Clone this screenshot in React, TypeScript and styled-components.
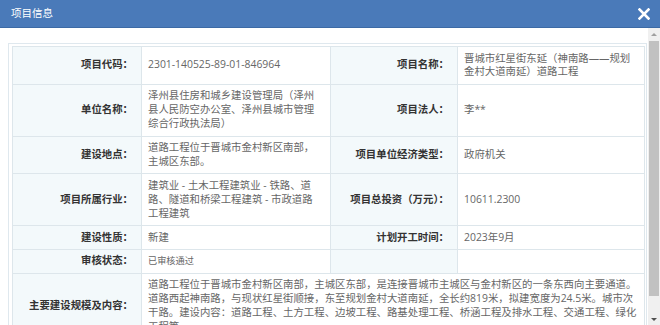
import React from 'react';
import styled, { createGlobalStyle } from 'styled-components';

const GlobalStyle = createGlobalStyle`
  *, *::before, *::after {
    box-sizing: border-box;
  }

  html, body {
    margin: 0;
    padding: 0;
    background: #fff;
  }

  body {
    font-family: "Open Sans", "Noto Sans CJK SC", sans-serif;
  }
`;

const Dialog = styled.div`
  width: 660px;
  height: 325px;
  display: flex;
  flex-direction: column;
  overflow: hidden;
  background: #fff;
`;

const TitleBar = styled.div`
  height: 28px;
  flex-shrink: 0;
  display: flex;
  align-items: center;
  justify-content: space-between;
  padding: 0 9px 0 11px;
  background: #4a7ab9;
  border-bottom: 1px solid #3c6aa5;
`;

const Title = styled.span`
  color: #fff;
  font-size: 10.5px;
  line-height: 1;
`;

const CloseButton = styled.button`
  display: flex;
  align-items: center;
  justify-content: center;
  width: 14px;
  height: 14px;
  padding: 0;
  border: none;
  background: transparent;
  cursor: pointer;
`;

const Body = styled.div`
  flex: 1;
  min-height: 0;
  display: flex;
`;

const Content = styled.div`
  flex: 1;
  overflow: hidden;
  padding: 15px 1px 0 8px;
`;

const Frame = styled.div`
  border: 1px solid #dfe8ee;
  padding: 2px 1px 2px 3px;
  background: #fff;
`;

const InfoTable = styled.table`
  width: 100%;
  border-collapse: collapse;
  table-layout: fixed;
  font-size: 10.4px;
  line-height: 13.9px;
`;

const Col = styled.col<{ $w?: number }>`
  width: ${p => (p.$w ? `${p.$w}px` : 'auto')};
`;

const LabelCell = styled.th`
  padding: 4.5px 8px 4.5px 6px;
  border: 1px solid #dde6eb;
  background: #f3f9fb;
  color: #333;
  font-weight: 700;
  text-align: right;
  vertical-align: middle;
`;

const ValueCell = styled.td<{ $small?: boolean; $wide?: boolean }>`
  padding: 4.5px ${p => (p.$wide ? '3px' : '12px')} 4.5px 6px;
  border: 1px solid #dde6eb;
  background: #fff;
  color: #666;
  text-align: left;
  vertical-align: middle;
  font-size: ${p => (p.$small ? '9.2px' : '10.4px')};
`;

const ScrollRail = styled.div`
  width: 12px;
  flex-shrink: 0;
  display: flex;
  flex-direction: column;
  background: #f0f0f0;
`;

const RailArrow = styled.div<{ $dir: 'up' | 'down' }>`
  height: 12px;
  display: flex;
  align-items: center;
  justify-content: center;

  &::before {
    content: '';
    border-left: 3px solid transparent;
    border-right: 3px solid transparent;
    ${p =>
      p.$dir === 'up'
        ? 'border-bottom: 3px solid #a0a0a0;'
        : 'border-top: 3px solid #505050;'}
  }
`;

const Track = styled.div`
  flex: 1;
  padding: 1px 1px 0;
`;

const Thumb = styled.div`
  height: 255px;
  background: #c1c1c1;
`;

const App: React.FC = () => {
  return (
    <Dialog>
      <GlobalStyle />
      <TitleBar>
        <Title>项目信息</Title>
        <CloseButton aria-label="关闭">
          <svg width="12" height="12" viewBox="0 0 12 12">
            <path d="M1.5 1.5 L10.5 10.5 M10.5 1.5 L1.5 10.5" stroke="#fff" strokeWidth="2.6" strokeLinecap="square" />
          </svg>
        </CloseButton>
      </TitleBar>

      <Body>
        <Content>
          <Frame>
            <InfoTable>
              <colgroup>
                <Col $w={129} />
                <Col $w={189} />
                <Col $w={127} />
                <Col />
              </colgroup>
              <tbody>
                <tr>
                  <LabelCell>项目代码：</LabelCell>
                  <ValueCell>2301-140525-89-01-846964</ValueCell>
                  <LabelCell>项目名称：</LabelCell>
                  <ValueCell>晋城市红星街东延（神南路——规划金村大道南延）道路工程</ValueCell>
                </tr>
                <tr>
                  <LabelCell>单位名称：</LabelCell>
                  <ValueCell>泽州县住房和城乡建设管理局（泽州县人民防空办公室、泽州县城市管理综合行政执法局）</ValueCell>
                  <LabelCell>项目法人：</LabelCell>
                  <ValueCell>李**</ValueCell>
                </tr>
                <tr>
                  <LabelCell>建设地点：</LabelCell>
                  <ValueCell>道路工程位于晋城市金村新区南部，主城区东部。</ValueCell>
                  <LabelCell>项目单位经济类型：</LabelCell>
                  <ValueCell>政府机关</ValueCell>
                </tr>
                <tr>
                  <LabelCell>项目所属行业：</LabelCell>
                  <ValueCell>建筑业 - 土木工程建筑业 - 铁路、道路、隧道和桥梁工程建筑 - 市政道路工程建筑</ValueCell>
                  <LabelCell>项目总投资（万元）：</LabelCell>
                  <ValueCell>10611.2300</ValueCell>
                </tr>
                <tr>
                  <LabelCell>建设性质：</LabelCell>
                  <ValueCell>新建</ValueCell>
                  <LabelCell>计划开工时间：</LabelCell>
                  <ValueCell>2023年9月</ValueCell>
                </tr>
                <tr>
                  <LabelCell>审核状态：</LabelCell>
                  <ValueCell $small>已审核通过</ValueCell>
                  <LabelCell />
                  <ValueCell />
                </tr>
                <tr>
                  <LabelCell>主要建设规模及内容：</LabelCell>
                  <ValueCell colSpan={3} $wide>
                    道路工程位于晋城市金村新区南部，主城区东部，是连接晋城市主城区与金村新区的一条东西向主要通道。道路西起神南路，与现状红星街顺接，东至规划金村大道南延，全长约819米，拟建宽度为24.5米。城市次干路。建设内容：道路工程、土方工程、边坡工程、路基处理工程、桥涵工程及排水工程、交通工程、绿化工程等。
                  </ValueCell>
                </tr>
              </tbody>
            </InfoTable>
          </Frame>
        </Content>

        <ScrollRail>
          <RailArrow $dir="up" />
          <Track>
            <Thumb />
          </Track>
          <RailArrow $dir="down" />
        </ScrollRail>
      </Body>
    </Dialog>
  );
};

export default App;
